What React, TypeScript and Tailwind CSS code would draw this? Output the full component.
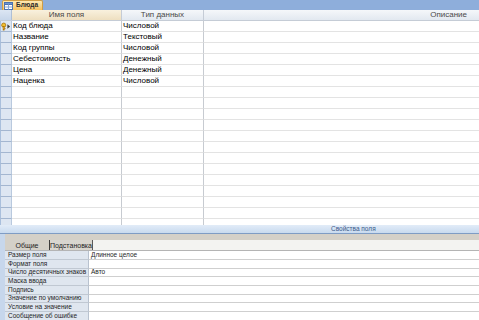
import React from "react";

const rows: [string, string][] = [
  ["Код блюда", "Числовой"],
  ["Название", "Текстовый"],
  ["Код группы", "Числовой"],
  ["Себестоимость", "Денежный"],
  ["Цена", "Денежный"],
  ["Наценка", "Числовой"],
];

const props: [string, string, number][] = [
  ["Размер поля", "Длинное целое", 9],
  ["Формат поля", "", 9],
  ["Число десятичных знаков", "Авто", 8],
  ["Маска ввода", "", 9],
  ["Подпись", "", 9],
  ["Значение по умолчанию", "", 8],
  ["Условие на значение", "", 9],
  ["Сообщение об ошибке", "", 9],
];

function TableIcon() {
  return (
    <svg width="9" height="8" viewBox="0 0 9 8">
      <rect x="0.5" y="0.5" width="8" height="7" fill="#ffffff" stroke="#4a72b0" />
      <rect x="0.5" y="0.5" width="8" height="2" fill="#6e95cf" stroke="#4a72b0" />
      <line x1="0.5" y1="5" x2="8.5" y2="5" stroke="#8aa8d6" />
      <line x1="4.5" y1="2.5" x2="4.5" y2="7.5" stroke="#8aa8d6" />
    </svg>
  );
}

function KeyIcon() {
  return (
    <svg width="11" height="9" viewBox="0 0 11 9">
      <circle cx="3" cy="3" r="2.3" fill="#f3c02e" stroke="#a26b08" strokeWidth="0.8" />
      <rect x="2.2" y="4.5" width="1.6" height="4" fill="#e8ab1c" stroke="#a26b08" strokeWidth="0.5" />
      <rect x="3.6" y="6.4" width="1.4" height="1" fill="#a26b08" />
      <path d="M7 2 L10 4.5 L7 7 Z" fill="#3d3d3d" />
    </svg>
  );
}

export default function App() {
  const empty = Array.from({ length: 12 });
  return (
    <div className="w-[479px] h-[320px] overflow-hidden bg-white flex flex-col font-['Liberation_Sans',Arial,sans-serif] text-black">
      {/* document tab strip */}
      <div className="h-[10px] shrink-0 bg-[#8eaedb] flex items-end pl-[2px]">
        <div className="h-[10px] w-[41px] flex items-center gap-[3px] pl-[1px] rounded-t-[2px] border-x border-t border-[#cf9d45] bg-gradient-to-b from-[#fde9b2] to-[#f5c260]">
          <TableIcon />
          <span className="text-[6.5px] font-bold leading-none text-[#2b2b2b]">Блюда</span>
        </div>
      </div>

      {/* design grid */}
      <div className="h-[215px] shrink-0 flex flex-col">
        <div className="h-[11px] shrink-0 flex border-b border-[#c5ccd6] text-[8px] leading-none text-[#4a4a4a]">
          <div className="w-[12px] shrink-0 bg-gradient-to-b from-[#dce6f3] to-[#c7d6ea] border-r border-[#aebfd6]" />
          <div className="w-[110px] shrink-0 flex items-center justify-center border-r border-[#c5ccd6] bg-gradient-to-b from-[#f9f1de] to-[#eedfc0]">
            Имя поля
          </div>
          <div className="w-[82px] shrink-0 flex items-center justify-center border-r border-[#c5ccd6] bg-gradient-to-b from-[#f5f7fa] to-[#e2e8f0]">
            Тип данных
          </div>
          <div className="flex-1 flex items-center justify-end pr-[12px] bg-gradient-to-b from-[#f5f7fa] to-[#e2e8f0]">
            Описание
          </div>
        </div>
        {rows.map(([n, t], i) => (
          <div key={n} className="h-[11px] shrink-0 flex text-[8px] leading-none">
            <div className="w-[12px] shrink-0 flex items-center border-l border-l-[#a9bfdc] border-r border-r-[#b9c9de] border-b border-b-[#a3b6d0] bg-[#dde6f2]">
              {i === 0 ? <KeyIcon /> : null}
            </div>
            <div className="w-[110px] shrink-0 flex items-center pl-[1px] border-r border-r-[#c7cbd1] border-b border-b-[#e3e3e3]">
              {n}
            </div>
            <div className="w-[82px] shrink-0 flex items-center pl-[1px] border-r border-r-[#c7cbd1] border-b border-b-[#e3e3e3]">
              {t}
            </div>
            <div className="flex-1 border-b border-[#e3e3e3]" />
          </div>
        ))}
        {empty.map((_, i) => (
          <div key={i} className="h-[11px] shrink-0 flex">
            <div className="w-[12px] shrink-0 border-l border-l-[#a9bfdc] border-r border-r-[#b9c9de] border-b border-b-[#a3b6d0] bg-[#dde6f2]" />
            <div className="w-[110px] shrink-0 border-r border-r-[#c7cbd1] border-b border-b-[#e3e3e3]" />
            <div className="w-[82px] shrink-0 border-r border-r-[#c7cbd1] border-b border-b-[#e3e3e3]" />
            <div className="flex-1 border-b border-[#e3e3e3]" />
          </div>
        ))}
        <div className="flex-1 flex">
          <div className="w-[12px] shrink-0 border-l border-l-[#a9bfdc] border-r border-r-[#b9c9de] bg-[#dde6f2]" />
          <div className="w-[110px] shrink-0 border-r border-[#c7cbd1]" />
          <div className="w-[82px] shrink-0 border-r border-[#c7cbd1]" />
          <div className="flex-1" />
        </div>
      </div>

      {/* field properties caption */}
      <div className="h-[9px] shrink-0 flex items-center pl-[331px] border-b border-[#7f9cc4] bg-gradient-to-b from-[#e2ecf8] to-[#c8daef] text-[6.5px] leading-none text-[#3a5a8a]">
        Свойства поля
      </div>

      {/* properties pane */}
      <div className="flex-1 flex min-h-0">
        <div className="w-[5px] shrink-0 bg-[#c7d7ec]" />
        <div className="flex-1 flex flex-col">
          <div className="h-[6px] shrink-0 bg-[#d4d0c8]" />
          <div className="h-[10px] shrink-0 flex bg-[#f3f3f1] text-[7px] leading-none text-[#1e1e1e]">
            <div className="w-[44px] shrink-0 flex items-center justify-center bg-[#d4d0c8]">Общие</div>
            <div className="w-[44px] shrink-0 flex items-center justify-center bg-[#d9d6cf] border-l border-l-[#3c3c3c] border-r border-r-[#5a5a5a]">
              Подстановка
            </div>
          </div>
          <div className="flex-1 flex flex-col border-t border-[#b4b4b4] text-[6.5px] leading-none text-[#1e1e1e]">
            {props.map(([l, v, h]) => (
              <div key={l} className="shrink-0 flex" style={{ height: h }}>
                <div className="w-[84px] shrink-0 flex items-center pl-[3px] bg-[#dfe6ef] border-r border-r-[#b8c2cf] border-b border-b-[#c0c8d2] whitespace-nowrap">
                  {l}
                </div>
                <div className="flex-1 flex items-center pl-[2px] border-b border-[#cfcfcf]">{v}</div>
              </div>
            ))}
          </div>
        </div>
      </div>
    </div>
  );
}
